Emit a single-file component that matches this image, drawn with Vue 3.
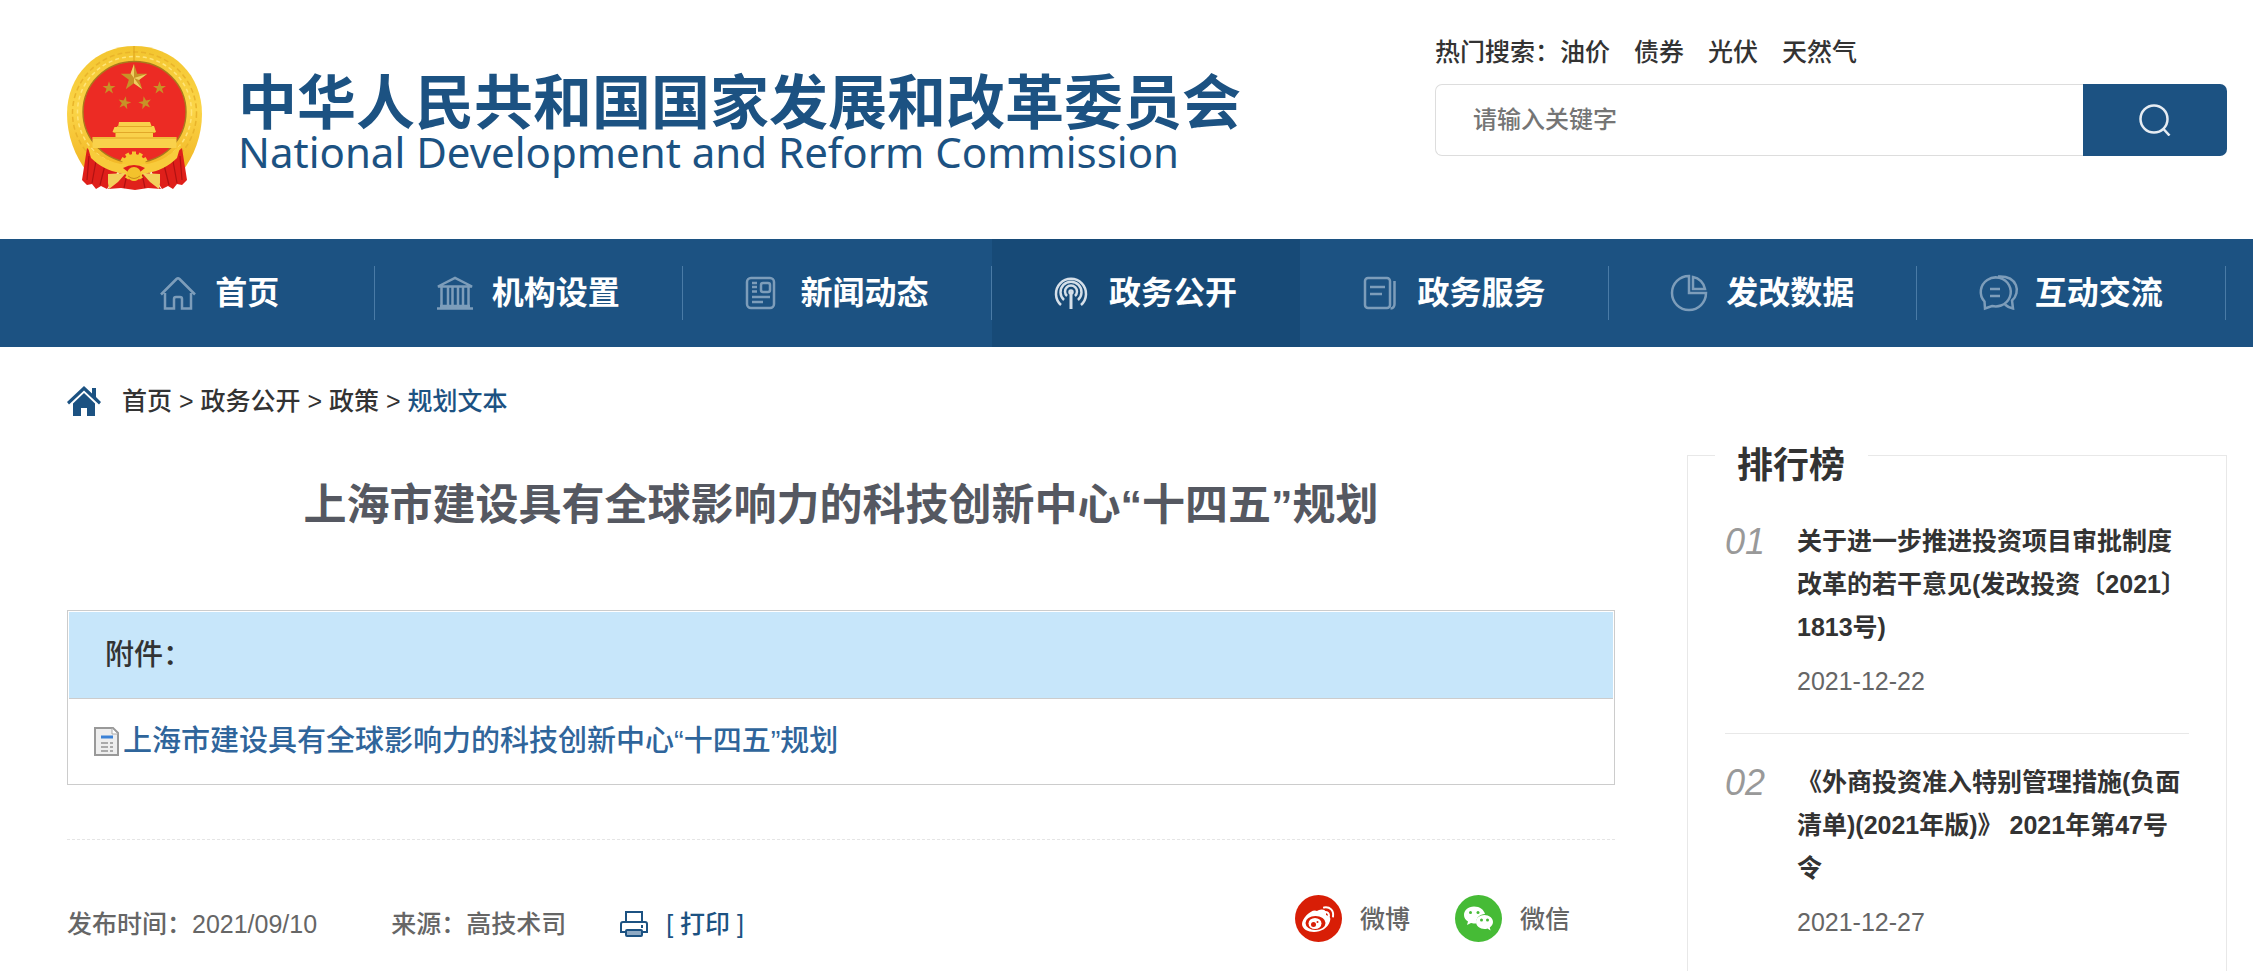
<script setup>
import { ref } from "vue";

const keyword = ref("");
const hotWords = ["油价", "债券", "光伏", "天然气"];

const menus = [
  { name: "首页", icon: "home" },
  { name: "机构设置", icon: "bank" },
  { name: "新闻动态", icon: "news" },
  { name: "政务公开", icon: "signal", active: true },
  { name: "政务服务", icon: "book" },
  { name: "发改数据", icon: "pie" },
  { name: "互动交流", icon: "chat" },
];

const crumbs = ["首页", "政务公开", "政策"];

const ranks = [
  {
    no: "01",
    title: "关于进一步推进投资项目审批制度改革的若干意见(发改投资〔2021〕1813号)",
    date: "2021-12-22",
  },
  {
    no: "02",
    title: "《外商投资准入特别管理措施(负面清单)(2021年版)》 2021年第47号令",
    date: "2021-12-27",
  },
];

// gear teeth of the emblem, one every 30 degrees
const teeth = Array.from({ length: 12 }, (_, i) => i * 30);

function printPage() {
  window.print();
}
</script>

<template>
  <div class="page">
    <header class="header">
      <a class="logo" href="#">
        <svg class="emblem" viewBox="0 0 135 144" aria-hidden="true">
          <defs>
            <linearGradient id="gold" x1="0" y1="0" x2="0" y2="1">
              <stop offset="0" stop-color="#f3c52f" />
              <stop offset="0.5" stop-color="#fbd548" />
              <stop offset="1" stop-color="#f1b422" />
            </linearGradient>
            <path id="star" d="M0-10 2.3-3.1 9.5-3.1 3.7 1.2 5.9 8.1 0 3.8-5.9 8.1-3.7 1.2-9.5-3.1-2.3-3.1Z" />
          </defs>
          <path d="M67.500 0C106 0 135 29 135 68c0 22-8 42-20 58H20C8 110 0 90 0 68 0 29 29 0 67.500 0z" fill="url(#gold)" />
          <ellipse cx="67.5" cy="67" rx="62" ry="61" fill="none" stroke="#e9b42a" stroke-width="1.5" stroke-dasharray="5 3" />
          <ellipse cx="67.5" cy="66" rx="57" ry="55.5" fill="none" stroke="#ffe478" stroke-width="1.5" stroke-dasharray="4 3" />
          <path d="M67 0v16" stroke="#dda21c" stroke-width="1" />
          <ellipse cx="67.5" cy="66" rx="51.5" ry="50.5" fill="#ec2b24" stroke="#a9791c" stroke-width="1.4" />
          <g fill="#c79227">
            <use href="#star" transform="translate(67 32) scale(1.4)" />
            <use href="#star" transform="translate(42 42) scale(.68)" />
            <use href="#star" transform="translate(92.5 42) scale(.68)" />
            <use href="#star" transform="translate(57.5 57) scale(.68) rotate(12)" />
            <use href="#star" transform="translate(78 57) scale(.68) rotate(-12)" />
          </g>
          <path d="M67 18v14l-3.4-4.4zM67 32l13-4-8 6zM67 32l8 11-8-5.500z" fill="#f0cf62" />
          <path d="M52 76h31l1.500 4H87l2 6-3 1v4h23.500v11h-84V91H48.500v-4l-3-1 2-5H51z" fill="#f9d14b" />
          <path d="M50 80.500h35M47 86.500h41M26 92h83" stroke="#e2a829" stroke-width="1" fill="none" />
          <!-- ribbons -->
          <path d="M20 102c10 9 22 16 33 18l-4 9-9 14-6-3-5 3-4-5-5 1-5-5z" fill="#df1f1a" />
          <path d="M115 102c-10 9-22 16-33 18l4 9 9 14 6-3 5 3 4-5 5 1 5-5z" fill="#df1f1a" />
          <path d="M41 143l12-17h29l12 17-13-1-13 2-14-2z" fill="#e0211b" />
          <path d="M22 110l-2 24M29 115l-4 22M38 119l-5 20M113 110l2 24M106 115l4 22M97 119l5 20M60 128l-3 14M75 128l3 14" stroke="#b01212" stroke-width="1.200" fill="none" />
          <!-- gear and wheat stems -->
          <g transform="translate(67 120)" fill="#f6c832">
            <circle r="12" />
            <rect v-for="deg in teeth" :key="deg" x="-2" y="-14.500" width="4" height="4" :transform="`rotate(${deg})`" />
          </g>
          <path d="M20 98c10 12 24 20 38 20l9 4 9-4c14 0 28-8 38-20l-4 14c-8 8-18 13-29 15l-14-1-14 1c-11-2-21-7-29-15z" fill="#f8cb3b" />
          <path d="M41 128l18-1-8 9-9 7-1-6zM93 128l-18-1 8 9 9 7 1-6z" fill="#f3d05c" />
          <path d="M56 122q11-6 22 0l-5 4H61z" fill="#df1f1a" />
          <circle cx="67" cy="128" r="7" fill="#f3c22c" />
          <path d="M61 130q6 5 12 0" stroke="#c68d18" fill="none" />
        </svg>
        <span class="wordmark">
          <span class="wordmark-cn">中华人民共和国国家发展和改革委员会</span>
          <span class="wordmark-en">National Development and Reform Commission</span>
        </span>
      </a>

      <div class="search">
        <div class="hot">
          <span>热门搜索：</span>
          <a v-for="word in hotWords" :key="word" href="#">{{ word }}</a>
        </div>
        <form class="search-form" @submit.prevent>
          <input v-model="keyword" type="text" placeholder="请输入关键字" aria-label="请输入关键字" />
          <button type="submit" aria-label="搜索">
            <svg viewBox="0 0 32 32" aria-hidden="true">
              <circle cx="15" cy="15" r="13.500" />
              <path d="M24.500 25l6 6.500" />
            </svg>
          </button>
        </form>
      </div>
    </header>

    <nav class="nav">
      <ul>
        <li v-for="menu in menus" :key="menu.name" :class="{ active: menu.active }">
          <a href="#">
            <svg class="nav-icon" viewBox="0 0 36 36" aria-hidden="true">
              <g v-if="menu.icon === 'home'">
                <path d="M1 19.500 16.500 4q1.500-1.500 3 0L35 19.500M5 18v15.500h9V24q0-2 2-2h4q2 0 2 2v9.500h9V18" />
              </g>
              <g v-else-if="menu.icon === 'bank'">
                <path d="M1 11.500 18 3l17 8.500zM0 33.500h36M3 31h30M4.500 12v19M11 12v19M15.500 12v19M21 12v19M26 12v19M31.500 12v19" />
              </g>
              <g v-else-if="menu.icon === 'news'">
                <rect x="2" y="3" width="27" height="30" rx="4" />
                <rect x="16" y="8" width="9" height="9" rx="2" />
                <path d="M7 8h5M7 12h5M7 16.500h5M7 22h18M7 27h11" />
              </g>
              <g v-else-if="menu.icon === 'signal'">
                <path d="M7 30a15 15 0 1 1 20 0M10 25a10.500 10.500 0 1 1 14 0M13 21a6 6 0 1 1 8 0" />
                <path d="M17 17v17" stroke-width="3" />
                <circle cx="17" cy="17" r="1.500" />
              </g>
              <g v-else-if="menu.icon === 'book'">
                <rect x="2" y="3" width="25" height="30" rx="3" />
                <path d="M31.500 6v23q0 4-4 4.500M7 12h15M7 19h12" />
              </g>
              <g v-else-if="menu.icon === 'pie'">
                <path d="M18 1A17 17 0 1 0 35 18H18zM22 2v12h12A14.500 14.500 0 0 0 22 2z" />
              </g>
              <g v-else>
                <path d="M5 33.500 4.500 26.500A15 14.500 0 1 1 21 30.500q-4 1.500-9 .5z" />
                <path d="M18 1.500c20-1 23 16 14 24l1 8q-5-1-8-4M10 14h10M10 21h10" />
              </g>
            </svg>
            <span>{{ menu.name }}</span>
          </a>
        </li>
      </ul>
    </nav>

    <div class="content">
      <main class="main">
        <div class="crumbs">
          <svg viewBox="0 0 34 30" aria-hidden="true">
            <path d="M17 0 0 16l2 2.500L17 4.500l15 14 2-2.500-5-5V2h-4v5.500z" />
            <path d="M17 7 6 17.500V30h8v-8h6v8h8V17.500z" />
          </svg>
          <p>
            <template v-for="crumb in crumbs" :key="crumb"><a href="#">{{ crumb }}</a> &gt; </template>
            <a class="current" href="#">规划文本</a>
          </p>
        </div>

        <h1>上海市建设具有全球影响力的科技创新中心“十四五”规划</h1>

        <section class="attachment">
          <h2>附件：</h2>
          <p>
            <svg viewBox="0 0 25 29" aria-hidden="true">
              <path d="M1 1h18l5 5v22H1z" fill="#eee" stroke="#999" stroke-width="2" />
              <path d="M18 1v6h6z" fill="#fff" stroke="#aaa" />
              <path d="M7 10h12" stroke="#3c82d6" stroke-width="3" />
              <path d="M7 16h7M16 16h3M7 20h7M16 20h3M7 24h7M16 24h3" stroke="#aaa" stroke-width="2" />
            </svg>
            <a href="#">上海市建设具有全球影响力的科技创新中心“十四五”规划</a>
          </p>
        </section>

        <div class="meta">
          <span>发布时间：2021/09/10</span>
          <span class="source">来源：高技术司</span>
          <button class="print" type="button" @click="printPage">
            <svg viewBox="0 0 28 26" aria-hidden="true">
              <path d="M6 11V1h16v10M5 21H1v-8q0-2 2-2h22q2 0 2 2v8h-4" fill="none" stroke="#1c5282" stroke-width="2" />
              <rect x="6" y="19" width="16" height="6" rx="1" fill="#8faac4" stroke="#1c5282" stroke-width="2" />
              <path d="M22 14v3" stroke="#1c5282" stroke-width="2" />
            </svg>
            <span>[ 打印 ]</span>
          </button>
          <div class="share">
            <a href="#">
              <svg viewBox="0 0 47 47" aria-hidden="true">
                <circle cx="23.500" cy="23.500" r="23.500" fill="#d81e06" />
                <path d="M21 17c2-3 10-4 10 1v2c4 1 5 3 4 6-2 7-9 11-16 11-6 0-12-3-12-8 0-6 10-16 15-13q2 1-1 1z" fill="#fff" />
                <ellipse cx="20.500" cy="28" rx="10" ry="7" fill="#d81e06" />
                <ellipse cx="20" cy="28.500" rx="6.500" ry="5.500" fill="#fff" />
                <circle cx="18.500" cy="29.500" r="2.500" fill="#d81e06" />
                <circle cx="22.500" cy="27" r="1" fill="#d81e06" />
                <path d="M29 12.500c6-1 10 3 9 9M30 17c3 0 4 1 4 4" fill="none" stroke="#fff" stroke-width="2" stroke-linecap="round" />
              </svg>
              <span>微博</span>
            </a>
            <a href="#">
              <svg viewBox="0 0 47 47" aria-hidden="true">
                <circle cx="23.500" cy="23.500" r="23.500" fill="#46bb36" />
                <path d="M19 11.500c-6 0-10 4-10 8.500 0 3 1.500 5 4 6.500l-1 3.500 4-2c2 .5 3 .5 5 .5 0-6 4-9.500 9-9.500-1-4-5-7.500-11-7.500z" fill="#fff" />
                <path d="M29.500 20c-5 0-8.500 3-8.500 7s4 7 8.500 7q1.500 0 3-.5l3 2-.7-3c2-1.500 3.200-3.300 3.200-5.500 0-4-4-7-8.500-7z" fill="#fff" />
                <g fill="#46bb36">
                  <circle cx="15.500" cy="17.500" r="1.500" />
                  <circle cx="23" cy="17.500" r="1.500" />
                  <circle cx="26.500" cy="25" r="1.500" />
                  <circle cx="32.500" cy="25" r="1.500" />
                </g>
              </svg>
              <span>微信</span>
            </a>
          </div>
        </div>
      </main>

      <aside class="rank">
        <h2>排行榜</h2>
        <ol>
          <li v-for="item in ranks" :key="item.no">
            <em>{{ item.no }}</em>
            <div>
              <a href="#">{{ item.title }}</a>
              <time>{{ item.date }}</time>
            </div>
          </li>
        </ol>
      </aside>
    </div>
  </div>
</template>

<style>
body {
  margin: 0;
  background: #fff;
}
</style>

<style scoped>
* {
  box-sizing: border-box;
}

.page {
  min-height: 100vh;
  display: flex;
  flex-direction: column;
  color: #333;
  font-family: "Liberation Sans", "Noto Sans CJK SC", sans-serif;
  font-size: 25px;
  font-weight: 500;
  line-height: 36px;
}

h1,
h2,
p,
ul,
ol {
  margin: 0;
  padding: 0;
  list-style: none;
}

a {
  color: inherit;
  text-decoration: none;
}

button {
  border: none;
  padding: 0;
  background: none;
  font: inherit;
  cursor: pointer;
}

.header {
  display: flex;
  justify-content: space-between;
  padding: 34px 26px 49px 67px;
}

.logo {
  display: flex;
  align-items: flex-start;
  gap: 36px;
  padding-top: 12px;
  color: #1c5282;
}

.emblem {
  width: 135px;
  height: 144px;
}

.wordmark {
  display: flex;
  flex-direction: column;
  padding-top: 28px;
  white-space: nowrap;
}

.wordmark-cn {
  font-size: 59px;
  font-weight: 700;
  line-height: 60px;
}

.wordmark-en {
  font-family: "Noto Sans", sans-serif;
  font-size: 42px;
  font-weight: 400;
  line-height: 36px;
}

.search {
  width: 37%;
  max-width: 792px;
}

.hot {
  display: flex;
  gap: 24px;
  margin-bottom: 14px;
}

.hot span {
  margin-right: -24px;
}

.search-form {
  display: flex;
  height: 72px;
}

.search-form input {
  flex: 1;
  min-width: 0;
  border: 1px solid #ddd;
  border-right: none;
  border-radius: 7px 0 0 7px;
  padding: 0 37px;
  color: #333;
  font: inherit;
  font-size: 24px;
  outline: none;
}

.search-form input::placeholder {
  color: #757575;
}

.search-form button {
  width: 144px;
  border-radius: 0 7px 7px 0;
  background: #1c5282;
}

.search-form svg {
  display: block;
  width: 32px;
  height: 32px;
  margin: 0 auto;
  fill: none;
  stroke: #e6ecf2;
  stroke-width: 2.5;
}

.nav {
  padding: 0 27px 0 66px;
  background: #1c5282;
}

.nav ul {
  display: flex;
}

.nav li {
  flex: 1;
  padding: 27px 0;
}

.nav li.active {
  background: #174a77;
}

.nav a {
  display: flex;
  align-items: center;
  justify-content: center;
  gap: 19px;
  height: 54px;
  border-right: 1px solid #4a7ba6;
  color: #fff;
  font-size: 32px;
  font-weight: 700;
}

.nav li.active a {
  border-color: transparent;
}

.nav-icon {
  width: 36px;
  height: 36px;
  overflow: visible;
  fill: none;
  stroke: #7d9dba;
  stroke-width: 2.5;
}

.active .nav-icon {
  stroke: #d5dfe9;
}

.content {
  flex: 1;
  display: flex;
  gap: 72px;
  padding: 0 26px 0 67px;
}

.main {
  flex: 1;
}

.crumbs {
  display: flex;
  align-items: center;
  gap: 21px;
  padding-top: 36px;
}

.crumbs svg {
  width: 34px;
  height: 30px;
  fill: #1c5282;
}

.crumbs .current {
  color: #1c5282;
}

h1 {
  padding: 56px 0 74px;
  color: #555861;
  font-size: 43px;
  font-weight: 700;
  line-height: 61px;
  text-align: center;
}

.attachment {
  border: 1px solid #ccc;
  padding: 1px;
  font-size: 29px;
}

.attachment h2 {
  padding: 25px 36px;
  border-bottom: 1px solid #ccc;
  background: #c7e6fa;
  font-size: 29px;
  font-weight: 500;
}

.attachment p {
  display: flex;
  align-items: center;
  gap: 4px;
  padding: 24px 25px;
  color: #2f659b;
}

.attachment svg {
  width: 25px;
  height: 29px;
}

.meta {
  display: flex;
  align-items: flex-end;
  margin-top: 54px;
  border-top: 1px dashed #e5e5e5;
  padding: 55px 45px 0 0;
  color: #666;
}

.source {
  margin-left: 74px;
}

.print {
  display: flex;
  align-items: center;
  gap: 18px;
  margin-left: 54px;
  color: #1c5282;
}

.print svg {
  width: 28px;
  height: 26px;
}

.share {
  display: flex;
  gap: 45px;
  margin-left: auto;
}

.share a {
  display: flex;
  align-items: center;
  gap: 18px;
}

.share svg {
  width: 47px;
  height: 47px;
}

.rank {
  width: 25%;
  margin-top: 108px;
  border: 1px solid #e8e8e8;
  border-bottom: none;
  padding: 0 37px;
}

.rank h2 {
  width: 153px;
  margin: -17px 0 0 -10px;
  padding: 0 22px;
  background: #fff;
  font-size: 36px;
  font-weight: 700;
  line-height: 54px;
}

.rank li {
  display: flex;
  padding: 27px 0 34px;
}

.rank li + li {
  border-top: 1px solid #e8e8e8;
}

.rank li:last-child {
  padding-bottom: 18px;
}

.rank em {
  flex: 0 0 72px;
  color: #999;
  font-size: 36px;
  font-weight: 400;
  line-height: 43px;
}

.rank a {
  display: block;
  font-weight: 600;
  line-height: 43px;
}

.rank time {
  display: block;
  margin-top: 14px;
  color: #666;
}
</style>
